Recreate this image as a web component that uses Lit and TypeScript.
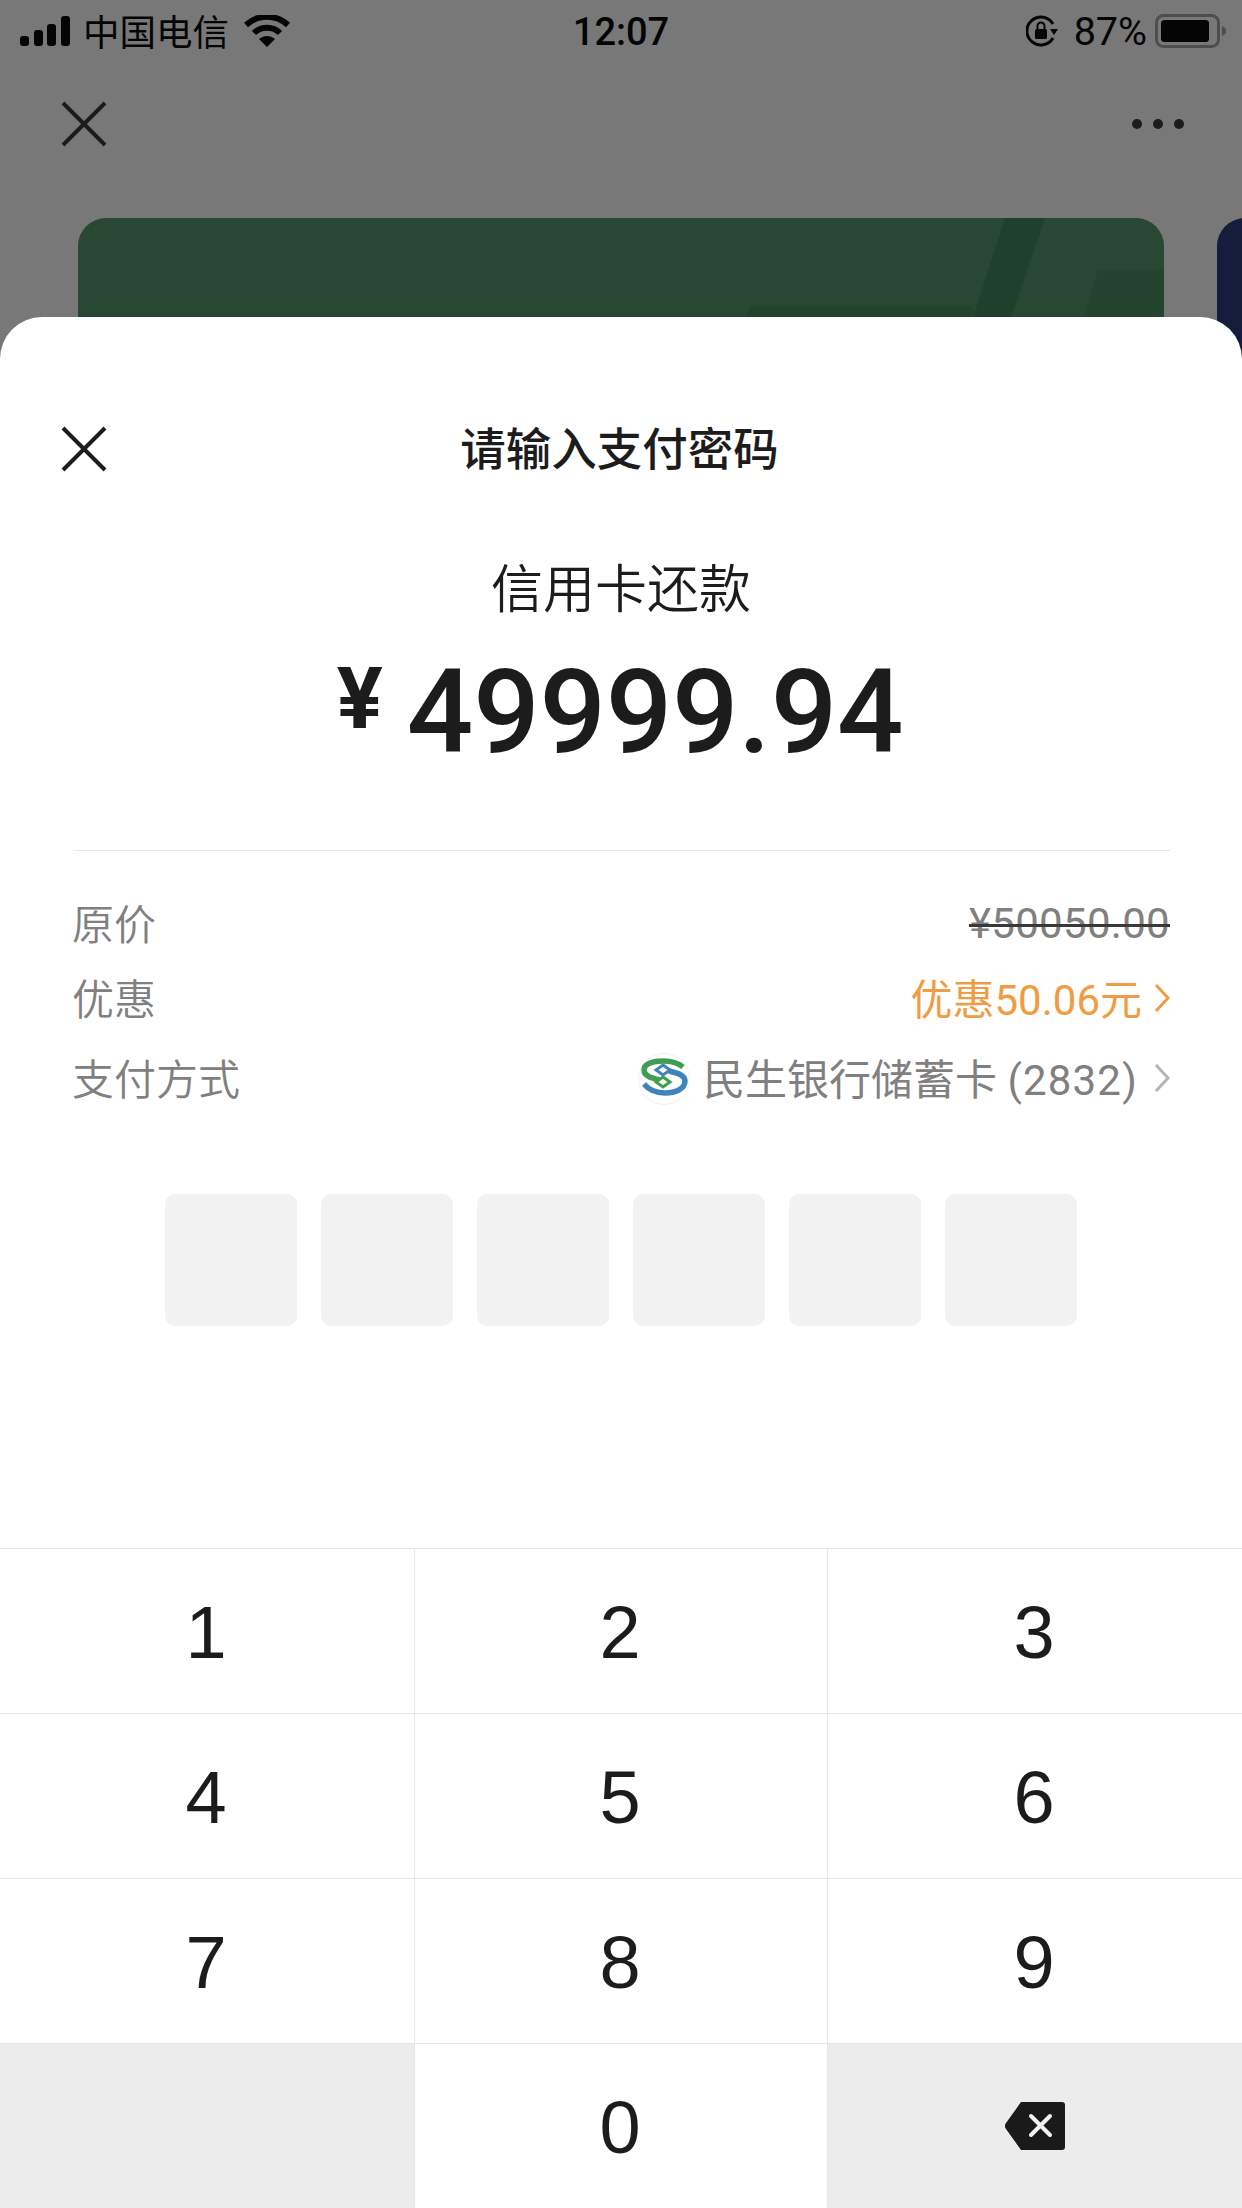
import { LitElement, html, css, svg } from "lit";
import { customElement } from "lit/decorators.js";

const closeIcon = svg`<svg class="x" viewBox="0 0 46 46" width="46" height="46"><path d="M2 2 L44 44 M44 2 L2 44" stroke="#1c1c1c" stroke-width="4" fill="none"/></svg>`;
const chevron = (c: string) => svg`<svg viewBox="0 0 16 30" width="16" height="30"><path d="M2 2 L14 15 L2 28" stroke="${c}" stroke-width="3" fill="none"/></svg>`;

@customElement("app-root")
export class AppRoot extends LitElement {
  static styles = css`
    :host { display: block; width: 1242px; height: 2208px; overflow: hidden; background: #787878; color: #1c1c1c;
      font-family: Roboto, "Noto Sans CJK SC", sans-serif; }
    .behind { height: 359px; overflow: hidden; }
    .status { height: 62px; display: flex; align-items: center; position: relative; color: #050505; font-size: 36px; }
    .status .left { display: flex; align-items: center; margin-left: 20px; }
    .carrier { margin-left: 13px; font-family: "Noto Sans CJK SC", sans-serif; font-size: 36.5px; line-height: 62px; }
    .wifi { margin-left: 15px; }
    .time { position: absolute; left: 0; right: 0; text-align: center; font-weight: 500; font-size: 38px; line-height: 62px; padding-top: 1px; }
    .status .right { margin-left: auto; margin-right: 16px; display: flex; align-items: center; }
    .lock { margin-right: 1px; }
    .pct { margin: 0 8px 0 15px; font-size: 39.5px; font-weight: 400; }
    .nav { height: 124px; display: flex; align-items: center; justify-content: space-between; padding: 0 58px 0 61px; box-sizing: border-box; }
    .dots { display: flex; gap: 11px; }
    .dots i { width: 10px; height: 10px; border-radius: 50%; background: #1c1c1c; }
    .cards { display: flex; gap: 53px; padding-left: 78px; margin-top: 32px; }
    .card { width: 1086px; height: 200px; flex: none; border-radius: 28px; overflow: hidden; background: #284834; }
    .card svg { display: block; }
    .card.navy { background: #141d3b; width: 200px; }
    .sheet { position: relative; margin-top: -42px; height: 1891px; background: #fff; border-radius: 42px 42px 0 0; display: flex; flex-direction: column; }
    .head { margin-top: 87px; height: 84px; position: relative; display: flex; align-items: center; justify-content: center; }
    .head .x { position: absolute; left: 61px; top: 22px; }
    .title { font-family: "Noto Sans CJK SC", sans-serif; font-size: 45.5px; font-weight: 500; margin-right: 3px; }
    .subject { margin-top: 68px; height: 60px; line-height: 60px; text-align: center; font-family: "Noto Sans CJK SC", sans-serif; font-size: 52px; font-weight: 350; }
    .amount { margin-top: 41px; height: 105px; display: flex; justify-content: center; align-items: flex-start; font-family: Roboto, sans-serif; font-weight: 500; padding-right: 2px; }
    .yen { font-size: 86px; line-height: 84px; margin-top: 0; font-weight: 700; margin-right: 24px; }
    .num { font-size: 117px; line-height: 110px; letter-spacing: -0.2px; }
    .divider { margin: 88px 72px 0 73px; height: 1px; background: #e6e6e6; }
    .row { display: flex; align-items: center; justify-content: space-between; padding: 0 72px 0 73px; font-size: 42px; color: #808080; }
    .label { font-family: "Noto Sans CJK SC", sans-serif; font-weight: 350; margin-left: -1px; }
    .r1 { margin-top: 40px; height: 60px; }
    .r2 { margin-top: 15px; height: 60px; }
    .r3 { margin-top: 20px; height: 60px; }
    .val { display: flex; align-items: center; }
    .strike { text-decoration: line-through; text-decoration-color: #3a3a3a; text-decoration-thickness: 3px; letter-spacing: 0.3px; padding-top: 5px; }
    .orange { color: #f09c42; }
    .orange svg { margin-left: 11px; margin-top: 3px; }
    .bank svg.chev { margin-left: 16px; margin-top: 3px; }
    .txt { font-family: Roboto, "Noto Sans CJK SC", sans-serif; }
    .orange .txt { margin-right: 1px; }
    .num-part { letter-spacing: 1.2px; }
    .bank svg.logo { margin-right: 13px; margin-top: 6px; }
    .boxes { display: flex; justify-content: center; gap: 24px; margin-top: 88px; }
    .box { width: 132px; height: 132px; background: #f2f2f2; border-radius: 10px; }
    .keys { margin-top: auto; display: grid; grid-template-columns: 414px 413px 415px; grid-auto-rows: 165px; }
    .key { border-top: 1px solid #e6e6e6; border-left: 1px solid #e6e6e6; box-sizing: border-box; display: flex; align-items: center; justify-content: center;
      font-family: "Liberation Sans", sans-serif; font-size: 74px; color: #1c1c1c; background: #fff; padding: 3px 2px 0 0; }
    .key:nth-child(3n+1) { border-left: none; }
    .key.grey { background: #ececec; padding: 0; }
  `;

  render() {
    const keys = ["1", "2", "3", "4", "5", "6", "7", "8", "9"];
    return html`
      <div class="behind">
        <div class="status">
          <div class="time">12:07</div>
          <div class="left">
            <svg width="50" height="30" viewBox="0 0 50 30" fill="#050505">
              <rect x="0" y="20" width="9" height="10" rx="3"/><rect x="14" y="14" width="9" height="16" rx="3"/><rect x="27" y="8" width="9" height="22" rx="3"/><rect x="41" y="0" width="9" height="30" rx="3"/>
            </svg>
            <span class="carrier">中国电信</span>
            <svg class="wifi" width="46" height="32" viewBox="0 0 46 32" fill="none" stroke="#050505" stroke-width="6">
              <path d="M2 10 C14 -1 32 -1 44 10"/><path d="M10 18 C17 11 29 11 36 18"/><path d="M23 32 L15 24 C20 20 26 20 31 24 Z" fill="#050505" stroke="none"/>
            </svg>
          </div>
          <div class="right">
            <svg class="lock" width="32" height="32" viewBox="0 0 32 32" fill="none">
              <path d="M27 9 A14 14 0 1 0 27 23" stroke="#050505" stroke-width="3"/>
              <path d="M24 14 L32 14 L28 20 Z" fill="#050505"/>
              <rect x="9" y="14" width="12" height="10" rx="1.5" fill="#050505"/>
              <path d="M11.5 14 V11 A3.5 3.5 0 0 1 18.5 11 V14" stroke="#050505" stroke-width="2"/>
            </svg>
            <span class="pct">87%</span>
            <svg width="71" height="34" viewBox="0 0 71 34">
              <rect x="1.5" y="1.5" width="62" height="31" rx="7" fill="none" stroke="#4d4d4d" stroke-width="3"/>
              <rect x="6" y="6" width="48" height="22" rx="3.5" fill="#050505"/>
              <path d="M67 12 C70 13 71 15 71 17 C71 19 70 21 67 22 Z" fill="#4d4d4d"/>
            </svg>
          </div>
        </div>
        <div class="nav">
          ${closeIcon}
          <div class="dots"><i></i><i></i><i></i></div>
        </div>
        <div class="cards">
          <div class="card">
            <svg width="1086" height="200" viewBox="0 0 1086 200">
              <path d="M672 88 L895 88 L895 100 L668 100 Z" fill="#24432f"/>
              <path d="M1020 52 L1086 52 L1086 100 L1006 100 Z" fill="#24432f"/>
              <path d="M927 0 L967 0 L933 100 L895 100 Z" fill="#1e402d"/>
            </svg>
          </div>
          <div class="card navy"></div>
        </div>
      </div>
      <div class="sheet">
        <div class="head">${closeIcon}<div class="title">请输入支付密码</div></div>
        <div class="subject">信用卡还款</div>
        <div class="amount"><span class="yen">¥</span><span class="num">49999.94</span></div>
        <div class="divider"></div>
        <div class="row r1"><span class="label">原价</span><span class="strike">¥50050.00</span></div>
        <div class="row r2"><span class="label">优惠</span><span class="val orange"><span class="txt">优惠50.06元</span>${chevron("#f09c42")}</span></div>
        <div class="row r3"><span class="label">支付方式</span>
          <span class="val bank">
            <svg class="logo" width="52" height="54" viewBox="0 0 52 54" fill="none">
              <circle cx="26" cy="27" r="25.5" fill="#fff" stroke="#f1f1f1"/>
              <path d="M45 15 C39 10 31 9 25 9 C14 9 6 12 6 18 C6 24 13 26 22 28" stroke="#3f9e50" stroke-width="5.5"/>
              <path d="M6 32 C11 38 19 41 27 41 C37 41 47 37 47 29 C47 23 39 21 31 19" stroke="#3e83bb" stroke-width="5.5"/>
              <path d="M25 13 L32 18 L25 23 L18 18 Z" fill="#fff" stroke="#3e83bb" stroke-width="3"/>
              <path d="M25 25 L32 30 L25 35 L18 30 Z" fill="#fff" stroke="#3f9e50" stroke-width="3"/>
            </svg>
            <span class="txt">民生银行储蓄卡 <span class="num-part">(2832)</span></span>
            <svg class="chev" viewBox="0 0 16 30" width="16" height="30"><path d="M2 2 L14 15 L2 28" stroke="#b5b5b5" stroke-width="3" fill="none"/></svg>
          </span>
        </div>
        <div class="boxes">${[0, 1, 2, 3, 4, 5].map(() => html`<div class="box"></div>`)}</div>
        <div class="keys">
          ${keys.map((k) => html`<div class="key">${k}</div>`)}
          <div class="key grey"></div>
          <div class="key">0</div>
          <div class="key grey">
            <svg width="60" height="48" viewBox="0 0 60 48">
              <path d="M16 0 H57 A3 3 0 0 1 60 3 V45 A3 3 0 0 1 57 48 H16 L1 27 A5 5 0 0 1 1 21 Z" fill="#1a1a1a"/>
              <path d="M26 14 L45 33 M45 14 L26 33" stroke="#f2f2f2" stroke-width="4" stroke-linecap="round"/>
            </svg>
          </div>
        </div>
      </div>
    `;
  }
}
